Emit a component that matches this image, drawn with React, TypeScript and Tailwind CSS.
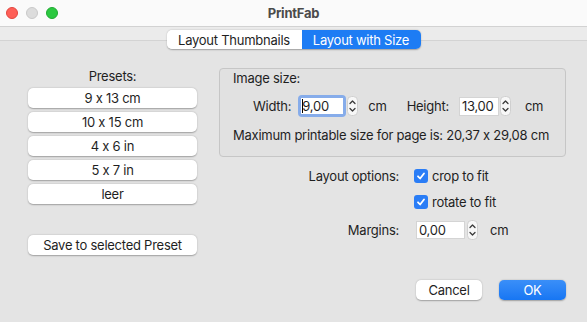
import React from "react";

const presets = ["9 x 13 cm", "10 x 15 cm", "4 x 6 in", "5 x 7 in", "leer"];

function Stepper() {
  return (
    <svg width="11" height="20" viewBox="0 0 11 20" className="shrink-0">
      <rect x="0.5" y="0.5" width="10" height="19" rx="4" fill="#f7f7f7" stroke="#cfcfcf" />
      <path d="M3 7.5 L5.5 5 L8 7.5" fill="none" stroke="#3a3a3a" strokeWidth="1.3" strokeLinecap="round" strokeLinejoin="round" />
      <path d="M3 12.5 L5.5 15 L8 12.5" fill="none" stroke="#3a3a3a" strokeWidth="1.3" strokeLinecap="round" strokeLinejoin="round" />
    </svg>
  );
}

function Checkbox() {
  return (
    <span className="flex h-[14px] w-[14px] shrink-0 items-center justify-center rounded-[3px] bg-[#2a7df6]">
      <svg width="10" height="10" viewBox="0 0 10 10">
        <path d="M2 5.3 L4.1 7.5 L8 2.5" fill="none" stroke="#fff" strokeWidth="1.8" strokeLinecap="round" strokeLinejoin="round" />
      </svg>
    </span>
  );
}

function MacButton({ children, className = "" }: { children: React.ReactNode; className?: string }) {
  return (
    <div
      className={`flex h-[20px] items-center justify-center rounded-[5px] bg-white text-[13px] text-[#1f1f1f] shadow-[0_0.5px_1.5px_rgba(0,0,0,0.3)] ${className}`}
    >
      {children}
    </div>
  );
}

export default function App() {
  return (
    <div className="flex h-[322px] w-[587px] flex-col overflow-hidden whitespace-nowrap bg-[#e4e4e4] text-[13px] leading-[16px] tracking-[-0.25px] text-[#1f1f1f] [font-family:Inter,'Liberation_Sans',sans-serif] [font-feature-settings:'calt'_0]">
      {/* title bar */}
      <div className="grid h-[27px] shrink-0 grid-cols-[1fr_auto_1fr] items-center border-b border-[#d2d2d2] bg-[#fafafa]">
        <div className="flex items-center gap-[8px] pl-[6px]">
          <span className="h-[12px] w-[12px] rounded-full border border-[#e2463f] bg-[#fe5f57]" />
          <span className="h-[12px] w-[12px] rounded-full border border-[#c9c9c9] bg-[#dcdcdc]" />
          <span className="h-[12px] w-[12px] rounded-full border border-[#1faa31] bg-[#2bc840]" />
        </div>
        <div className="font-bold text-[#4a4a4a]">PrintFab</div>
        <div />
      </div>

      {/* tab strip */}
      <div className="shrink-0 bg-[#ebebeb] pt-[3px]">
        <div className="relative z-10 -mb-[9px] flex justify-center">
          <div className="flex h-[19px] overflow-hidden rounded-[5px] shadow-[0_0.5px_1.5px_rgba(0,0,0,0.3)]">
            <div className="flex w-[135px] items-center justify-center bg-white">Layout Thumbnails</div>
            <div className="flex w-[119px] items-center justify-center bg-[#1d7cf4] text-white">Layout with Size</div>
          </div>
        </div>
      </div>

      {/* body */}
      <div className="flex flex-1 border-t border-[#d3d3d3] pl-[28px] pr-[21px] pt-[27px]">
        {/* presets */}
        <div className="flex w-[169px] flex-col">
          <div className="text-center">Presets:</div>
          <div className="mt-[4px] flex flex-col gap-[4px]">
            {presets.map((p) => (
              <MacButton key={p}>{p}</MacButton>
            ))}
          </div>
          <MacButton className="mt-[31px]">Save to selected Preset</MacButton>
        </div>

        {/* right side */}
        <div className="ml-[22px] flex flex-1 flex-col">
          <div className="rounded-[4px] border border-[#c6c6c6] bg-[#e1e1e1] px-[13px] pb-[13px] pt-[1px]">
            <div>Image size:</div>
            <div className="mt-[9px] flex h-[22px] items-center pl-[20px]">
              <span>Width:</span>
              <div className="ml-[7px] rounded-[4px] bg-[#86acea] p-[3px]">
                <div className="flex h-[16px] w-[42px] items-center bg-white pl-[1px]">
                  <span className="h-[14px] w-[1px] bg-black" />
                  <span className="-ml-[1px]">9,00</span>
                </div>
              </div>
              <div className="ml-[1px]">
                <Stepper />
              </div>
              <span className="ml-[10px]">cm</span>
              <span className="ml-[20px]">Height:</span>
              <div className="ml-[10px] flex h-[19px] w-[40px] items-center border border-[#d4d4d4] bg-white pl-[2px]">13,00</div>
              <div className="ml-[1px]">
                <Stepper />
              </div>
              <span className="ml-[14px]">cm</span>
            </div>
            <div className="mt-[10px]">Maximum printable size for page is: 20,37 x 29,08 cm</div>
          </div>

          <div className="mt-[9px] grid grid-cols-[180px_auto] items-center gap-x-[15px]">
            <span className="h-[20px] text-right leading-[20px]">Layout options:</span>
            <div className="flex h-[20px] items-center gap-[4px]">
              <Checkbox />
              <span>crop to fit</span>
            </div>
            <span />
            <div className="mt-[6px] flex h-[20px] items-center gap-[4px]">
              <Checkbox />
              <span>rotate to fit</span>
            </div>
            <span className="mt-[8px] text-right">Margins:</span>
            <div className="mt-[8px] flex h-[20px] items-center pl-[2px]">
              <div className="flex h-[18px] w-[49px] items-center border border-[#d4d4d4] bg-white pl-[2px]">0,00</div>
              <div className="ml-[2px]">
                <Stepper />
              </div>
              <span className="ml-[12px]">cm</span>
            </div>
          </div>

          <div className="mt-[40px] flex justify-end gap-[17px]">
            <MacButton className="w-[66px]">Cancel</MacButton>
            <div className="flex h-[20px] w-[67px] items-center justify-center rounded-[5px] bg-gradient-to-b from-[#3a8ff8] to-[#1676f3] text-white shadow-[0_0.5px_1.5px_rgba(0,0,0,0.3)]">
              OK
            </div>
          </div>
        </div>
      </div>
    </div>
  );
}
